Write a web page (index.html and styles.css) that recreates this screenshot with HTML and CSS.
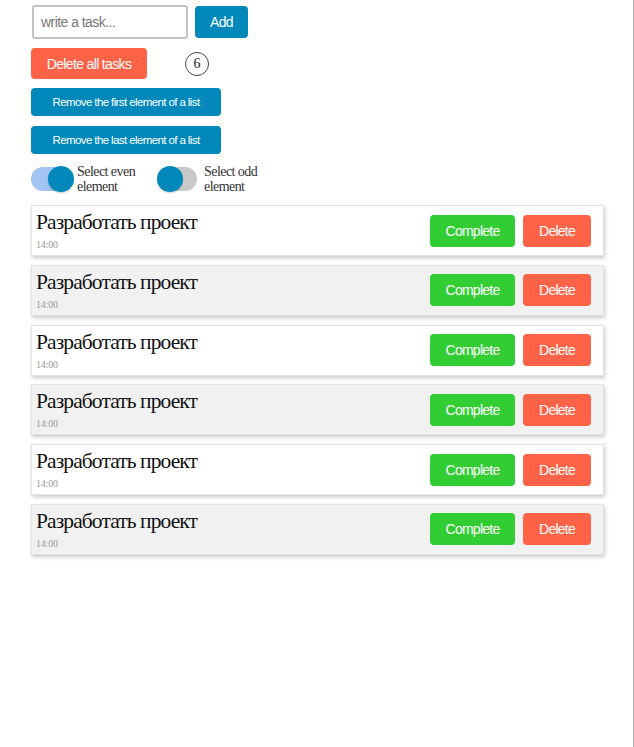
FILE: index.html
```html
<!DOCTYPE html>
<html lang="ru">
<head>
<meta charset="utf-8">
<title>Tasks</title>
<link rel="stylesheet" href="styles.css">
</head>
<body>
<div class="frame">
  <div class="app">
    <div class="add-row">
      <input class="task-input" type="text" placeholder="write a task...">
      <button class="btn btn-blue btn-add">Add</button>
    </div>
    <div class="counter-row">
      <button class="btn btn-red btn-delete-all">Delete all tasks</button>
      <span class="counter">6</span>
    </div>
    <button class="btn btn-blue btn-remove btn-remove-first">Remove the first element of a list</button>
    <button class="btn btn-blue btn-remove btn-remove-last">Remove the last element of a list</button>
    <div class="toggles">
      <label class="toggle">
        <span class="switch switch-on"><span class="knob"></span></span>
        <span class="toggle-label">Select even<br>element</span>
      </label>
      <label class="toggle">
        <span class="switch switch-off"><span class="knob"></span></span>
        <span class="toggle-label">Select odd<br>element</span>
      </label>
    </div>
    <ul class="tasks">
      <li class="task">
        <div class="task-text"><div class="task-title">Разработать проект</div><div class="task-time">14:00</div></div>
        <div class="task-actions"><button class="btn btn-green btn-task">Complete</button><button class="btn btn-red btn-task btn-task-del">Delete</button></div>
      </li>
      <li class="task task-alt">
        <div class="task-text"><div class="task-title">Разработать проект</div><div class="task-time">14:00</div></div>
        <div class="task-actions"><button class="btn btn-green btn-task">Complete</button><button class="btn btn-red btn-task btn-task-del">Delete</button></div>
      </li>
      <li class="task">
        <div class="task-text"><div class="task-title">Разработать проект</div><div class="task-time">14:00</div></div>
        <div class="task-actions"><button class="btn btn-green btn-task">Complete</button><button class="btn btn-red btn-task btn-task-del">Delete</button></div>
      </li>
      <li class="task task-alt">
        <div class="task-text"><div class="task-title">Разработать проект</div><div class="task-time">14:00</div></div>
        <div class="task-actions"><button class="btn btn-green btn-task">Complete</button><button class="btn btn-red btn-task btn-task-del">Delete</button></div>
      </li>
      <li class="task">
        <div class="task-text"><div class="task-title">Разработать проект</div><div class="task-time">14:00</div></div>
        <div class="task-actions"><button class="btn btn-green btn-task">Complete</button><button class="btn btn-red btn-task btn-task-del">Delete</button></div>
      </li>
      <li class="task task-alt">
        <div class="task-text"><div class="task-title">Разработать проект</div><div class="task-time">14:00</div></div>
        <div class="task-actions"><button class="btn btn-green btn-task">Complete</button><button class="btn btn-red btn-task btn-task-del">Delete</button></div>
      </li>
    </ul>
  </div>
</div>
</body>
</html>
```
FILE: styles.css
```css
html, body {
  margin: 0;
  padding: 0;
  height: 100%;
  background: #fff;
}
body {
  font-family: "Liberation Serif", "Times New Roman", serif;
  color: #222;
}
.frame {
  min-height: 100%;
  box-sizing: border-box;
  border-right: 1px solid #aaa;
  width: 634px;
}
.app {
  padding: 5px 30px 0 31px;
  display: flex;
  flex-direction: column;
  align-items: flex-start;
}
.btn {
  font-family: "Liberation Sans", Arial, sans-serif;
  color: #fff;
  border: none;
  border-radius: 4px;
  cursor: pointer;
  padding: 0;
  font-size: 14px;
  letter-spacing: -0.65px;
}
.btn-blue { background: #0088bb; }
.btn-red { background: #ff6347; }
.btn-green { background: #32cd32; }

.add-row {
  display: flex;
  align-items: center;
  gap: 7px;
  margin-left: 1px;
}
.task-input {
  box-sizing: border-box;
  width: 156px;
  height: 34px;
  border: 2px solid #c4c4c4;
  border-radius: 3px;
  padding: 0 7px;
  font-family: "Liberation Sans", Arial, sans-serif;
  font-size: 14px;
  letter-spacing: -0.55px;
  color: #333;
}
.task-input::placeholder { color: #777; }
.btn-add {
  width: 53px;
  height: 32px;
}
.counter-row {
  display: flex;
  align-items: center;
  margin-top: 9px;
}
.btn-delete-all {
  width: 116px;
  height: 31px;
}
.counter {
  box-sizing: border-box;
  width: 24px;
  height: 24px;
  border: 1px solid #444;
  border-radius: 50%;
  margin-left: 38px;
  display: flex;
  align-items: center;
  justify-content: center;
  font-size: 14px;
  color: #222;
}
.btn-remove {
  width: 190px;
  height: 28px;
  font-size: 11.5px;
  letter-spacing: -0.6px;
}
.btn-remove-first { margin-top: 9px; }
.btn-remove-last { margin-top: 10px; }

.toggles {
  display: flex;
  margin-top: 10px;
}
.toggle {
  display: flex;
  align-items: center;
  width: 127px;
}
.switch {
  position: relative;
  width: 42px;
  height: 24px;
  border-radius: 12px;
  margin-right: 4px;
  flex: none;
}
.switch-on { background: #a3c4f2; }
.switch-off { background: #c9c9c9; width: 39px; margin-right: 7px; }
.knob {
  position: absolute;
  top: -1px;
  width: 26px;
  height: 26px;
  border-radius: 50%;
  background: #0088bb;
  box-shadow: 0 1px 2px rgba(0,0,0,0.2);
}
.switch-on .knob { right: -1px; }
.switch-off .knob { left: -1px; }
.toggle-label {
  font-size: 14px;
  letter-spacing: -0.55px;
  line-height: 15px;
  color: #333;
}

.tasks {
  list-style: none;
  margin: 11px 0 0;
  padding: 0;
  width: 573px;
}
.task {
  box-sizing: border-box;
  height: 51px;
  margin-bottom: 8.8px;
  border: 1px solid #e2e2e2;
  background: #fff;
  box-shadow: 1px 2px 4px rgba(0,0,0,0.22);
  display: flex;
  align-items: center;
  justify-content: space-between;
  padding: 0 12px 0 4px;
}
.task-alt { background: #f1f1f1; }
.task-text {
  align-self: flex-start;
  padding-top: 5px;
}
.task-title {
  font-size: 21.5px;
  letter-spacing: -0.9px;
  line-height: 23px;
  color: #111;
}
.task-time {
  font-size: 10px;
  letter-spacing: -0.2px;
  line-height: 12px;
  margin-top: 5px;
  color: #999;
}
.task-actions {
  display: flex;
  gap: 8px;
}
.btn-task {
  height: 32px;
  width: 85px;
  letter-spacing: -0.75px;
}
.btn-task-del { width: 68px; }
```
